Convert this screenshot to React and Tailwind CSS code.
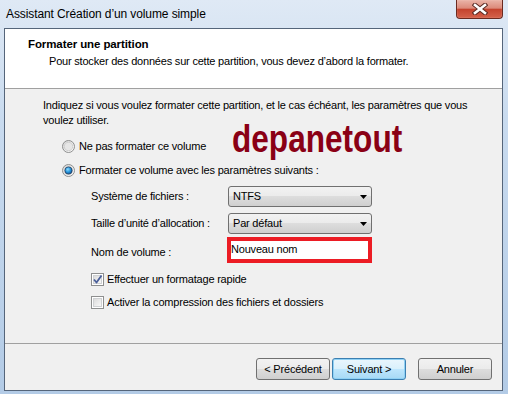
const btnBase =
  "w-[74px] h-[22px] rounded-[3px] border flex items-center justify-center text-[11px] tracking-[-0.2px] text-black";

function Radio({ checked }) {
  return (
    <svg width="13" height="13" viewBox="0 0 13 13" className="shrink-0">
      <defs>
        <linearGradient id={checked ? "rg1" : "rg0"} x1="0" y1="0" x2="1" y2="1">
          <stop offset="0" stopColor="#d4d4d4" />
          <stop offset="1" stopColor="#ffffff" />
        </linearGradient>
        <radialGradient id="dot" cx="0.4" cy="0.35" r="0.7">
          <stop offset="0" stopColor="#8fdcff" />
          <stop offset="0.5" stopColor="#2b9be0" />
          <stop offset="1" stopColor="#0b4f8f" />
        </radialGradient>
      </defs>
      <circle cx="6.5" cy="6.5" r="6" fill={`url(#${checked ? "rg1" : "rg0"})`} stroke="#8e8f8f" strokeWidth="1" />
      <circle cx="6.5" cy="6.5" r="4.2" fill="#e6e6e6" stroke="#c9c9c9" strokeWidth="0.8" />
      {checked && <circle cx="6.5" cy="6.5" r="3.6" fill="url(#dot)" stroke="#1d3f66" strokeWidth="0.8" />}
    </svg>
  );
}

function Checkbox({ checked }) {
  return (
    <div className="w-[13px] h-[13px] border border-[#8e8f8f] bg-white shrink-0 flex items-center justify-center">
      <div className="w-[9px] h-[9px] border border-[#cfd1d3] bg-gradient-to-br from-[#dcdcdc] to-[#f8f8f8] relative">
        {checked && (
          <svg width="11" height="11" viewBox="0 0 11 11" className="absolute left-[-2px] top-[-2px]">
            <path d="M2 5.5 L4.5 8.5 L9.5 1.5" fill="none" stroke="#4a5f9a" strokeWidth="1.8" strokeLinejoin="round" />
          </svg>
        )}
      </div>
    </div>
  );
}

function Select({ value }) {
  return (
    <div className="w-[144px] h-[21px] border border-[#707070] rounded-[3px] bg-[linear-gradient(to_bottom,#f2f2f2_0%,#ebebeb_50%,#dddddd_50%,#cfcfcf_100%)] flex items-center justify-between pl-[4px] pr-[4px]">
      <span>{value}</span>
      <svg width="7" height="4" viewBox="0 0 7 4">
        <path d="M0 0h7L3.5 4z" fill="#000" />
      </svg>
    </div>
  );
}

export default function App() {
  return (
    <div className="w-[508px] h-[394px] overflow-hidden relative bg-[linear-gradient(to_bottom,#dfe9f5_0%,#c9dbef_30%,#b3cbe6_100%)] font-['Liberation_Sans',Arial,sans-serif] text-black">
      {/* title bar */}
      <div className="h-[28px] flex items-center pl-[6px] text-[12px] tracking-[-0.1px] text-black">
        Assistant Création d’un volume simple
      </div>

      {/* close button */}
      <div className="absolute left-[456px] top-0 w-[47px] h-[19px] rounded-b-[4px] border border-t-0 border-[#6b2a20] bg-[linear-gradient(to_bottom,#eab4a8_0%,#dc8a7a_45%,#c4432e_52%,#d4624b_100%)] flex items-center justify-center shadow-[inset_0_0_1px_#ffd9d0]">
        <svg width="16" height="12" viewBox="0 0 16 12">
          <path d="M3 2 L13 10 M13 2 L3 10" stroke="#5a2b24" strokeWidth="4.6" strokeLinecap="square" />
          <path d="M3 2 L13 10 M13 2 L3 10" stroke="#ffffff" strokeWidth="2.6" strokeLinecap="square" />
        </svg>
      </div>

      {/* client area */}
      <div className="ml-[4px] w-[499px] h-[363px] border border-[#55657a] bg-[#f0f0f0] flex flex-col">
        {/* header */}
        <div className="h-[60px] bg-white border-b border-[#a0a0a0] pt-[8px] shrink-0">
          <div className="pl-[23px] text-[11.5px] font-bold leading-[15px] tracking-[-0.1px]">Formater une partition</div>
          <div className="pl-[44px] mt-[2px] text-[11px] leading-[15px] tracking-[-0.2px]">
            Pour stocker des données sur cette partition, vous devez d’abord la formater.
          </div>
        </div>

        {/* body */}
        <div className="h-[254px] relative pt-[9px] pl-[38px] text-[11px] tracking-[-0.2px] shrink-0">
          <p className="leading-[15px]">
            Indiquez si vous voulez formater cette partition, et le cas échéant, les paramètres que vous
            <br />
            voulez utiliser.
          </p>

          <div className="mt-[10px] ml-[19px] h-[16px] flex items-center gap-[4px]">
            <Radio checked={false} />
            <span>Ne pas formater ce volume</span>
          </div>
          <div className="mt-[8px] ml-[19px] h-[16px] flex items-center gap-[4px]">
            <Radio checked />
            <span>Formater ce volume avec les paramètres suivants :</span>
          </div>

          <div className="mt-[8px] ml-[48px] h-[21px] flex items-center">
            <span className="w-[137px]">Système de fichiers :</span>
            <Select value="NTFS" />
          </div>
          <div className="mt-[6px] ml-[48px] h-[21px] flex items-center">
            <span className="w-[137px]">Taille d’unité d’allocation :</span>
            <Select value="Par défaut" />
          </div>
          <div className="mt-[3px] ml-[48px] h-[26px] flex items-center">
            <span className="w-[136px] pt-[4px]">Nom de volume :</span>
            <div className="w-[145px] h-[26px] border-[4px] border-[#ec1c24] bg-white flex items-center pb-[2px]">
              Nouveau nom
            </div>
          </div>

          <div className="mt-[8px] ml-[48px] h-[16px] flex items-center gap-[3px]">
            <Checkbox checked />
            <span>Effectuer un formatage rapide</span>
          </div>
          <div className="mt-[7px] ml-[48px] h-[16px] flex items-center gap-[3px]">
            <Checkbox checked={false} />
            <span>Activer la compression des fichiers et dossiers</span>
          </div>

          {/* watermark */}
          <div className="absolute left-[227px] top-[30px] text-[39px] leading-none font-bold text-[#8a0015] tracking-normal scale-x-[0.81] origin-left whitespace-nowrap">
            depanetout
          </div>
        </div>

        {/* footer */}
        <div className="flex-1 border-t border-[#a0a0a0] flex justify-end items-start pt-[14px] pr-[10px]">
          <div className={`${btnBase} border-[#707070] bg-[linear-gradient(to_bottom,#f2f2f2_0%,#ebebeb_50%,#dddddd_50%,#cfcfcf_100%)]`}>
            &lt; Précédent
          </div>
          <div className={`${btnBase} ml-[2px] border-[#3c7fb1] bg-[linear-gradient(to_bottom,#eaf6fd_0%,#d9f0fc_50%,#bee6fd_50%,#a7d9f5_100%)] shadow-[inset_0_0_0_1px_#8fd1f5]`}>
            Suivant &gt;
          </div>
          <div className={`${btnBase} ml-[12px] border-[#707070] bg-[linear-gradient(to_bottom,#f2f2f2_0%,#ebebeb_50%,#dddddd_50%,#cfcfcf_100%)]`}>
            Annuler
          </div>
        </div>
      </div>
    </div>
  );
}
